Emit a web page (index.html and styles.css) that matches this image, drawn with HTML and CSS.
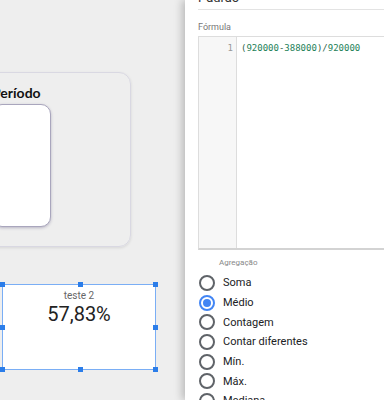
FILE: index.html
```html
<!DOCTYPE html>
<html>
<head>
  <title>Campo calculado</title>
  <link rel="stylesheet" href="styles.css">
</head>
<body>

<div class="canvas">
  <div class="card">
    <div class="card-title">Período</div>
    <div class="card-inner"></div>
  </div>

  <div class="scorecard">
    <div class="score-label">teste 2</div>
    <div class="score-value">57,83%</div>
    <span class="handle h-tl"></span>
    <span class="handle h-tm"></span>
    <span class="handle h-tr"></span>
    <span class="handle h-ml"></span>
    <span class="handle h-mr"></span>
    <span class="handle h-bl"></span>
    <span class="handle h-bm"></span>
    <span class="handle h-br"></span>
  </div>
</div>

<div class="panel">
  <div class="panel-head">Padrão</div>

  <div class="field-label">Fórmula</div>
  <div class="editor">
    <div class="gutter">1</div>
    <div class="code"><span class="op">(</span><span class="num">920000</span><span class="op">-</span><span class="num">388000</span><span class="op">)/</span><span class="num">920000</span></div>
  </div>

  <div class="agg-label">Agregação</div>
  <div class="radios">
    <div class="radio-row"><span class="radio"></span>Soma</div>
    <div class="radio-row"><span class="radio checked"></span>Médio</div>
    <div class="radio-row"><span class="radio"></span>Contagem</div>
    <div class="radio-row"><span class="radio"></span>Contar diferentes</div>
    <div class="radio-row"><span class="radio"></span>Mín.</div>
    <div class="radio-row"><span class="radio"></span>Máx.</div>
    <div class="radio-row"><span class="radio"></span>Mediana</div>
  </div>
</div>

</body>
</html>
```

FILE: styles.css
```css
/* page layout */
body {
  margin: 0;
  width: 384px;
  height: 400px;
  overflow: hidden;
  display: flex;
  background-color: #eeeeee;
  font-family: Roboto, Arial, sans-serif;
}

/* report canvas */
.canvas {
  width: 185px;
  flex: none;
  padding-top: 72px;
}
.card {
  margin-left: -20px;
  width: 138px;
  height: 162px;
  padding-top: 11px;
  padding-left: 11px;
  border: 1px solid #d9d8e2;
  border-radius: 12px;
  box-shadow: 0 1px 3px rgba(0, 0, 0, 0.1);
}
.card-title {
  font-family: Lato, "Open Sans", sans-serif;
  font-weight: bold;
  font-size: 14px;
  line-height: 17px;
  color: #111;
}
.card-inner {
  margin-top: 3px;
  width: 57px;
  height: 121px;
  background-color: white;
  border: 1px solid #a9a6bd;
  border-radius: 10px;
  box-shadow: 0 1px 3px rgba(60, 50, 100, 0.3);
}
.scorecard {
  position: relative;
  margin-top: 37px;
  margin-left: 2px;
  width: 154px;
  height: 86px;
  box-sizing: border-box;
  padding-top: 5px;
  background-color: white;
  border: 1px solid #7aaef5;
  text-align: center;
}
.score-label {
  font-size: 10px;
  line-height: 12px;
  color: #666;
}
.score-value {
  font-size: 20px;
  line-height: 24px;
  color: #222;
}
.handle {
  position: absolute;
  width: 5px;
  height: 5px;
  background-color: #2b7de9;
}
.h-tl, .h-tm, .h-tr { top: -3px; }
.h-bl, .h-bm, .h-br { bottom: -3px; }
.h-ml, .h-mr { top: 40px; }
.h-tl, .h-ml, .h-bl { left: -3px; }
.h-tr, .h-mr, .h-br { right: -3px; }
.h-tm, .h-bm { left: 75px; }

/* side panel */
.panel {
  flex: 1;
  background-color: white;
  box-shadow: -3px 0 8px rgba(0, 0, 0, 0.22);
  padding-left: 13px;
}
.panel-head {
  margin-top: -10px;
  height: 19px;
  font-size: 13px;
  line-height: 16px;
  color: #333;
  border-bottom: 1px solid #e3e3e3;
}
.field-label {
  margin-top: 12px;
  font-size: 9px;
  line-height: 11px;
  color: #777;
}
.editor {
  margin-top: 3px;
  width: 240px;
  height: 211px;
  display: flex;
  border: 1px solid #dddddd;
  border-bottom: 2px solid #d3d3d3;
}
.gutter {
  width: 34px;
  padding-right: 3px;
  padding-top: 5px;
  background-color: #f7f7f7;
  border-right: 1px solid #dddddd;
  text-align: right;
  font-family: "DejaVu Sans Mono", monospace;
  font-size: 9px;
  line-height: 13px;
  color: #999;
}
.code {
  padding-top: 5px;
  padding-left: 4px;
  font-family: "DejaVu Sans Mono", monospace;
  font-size: 9px;
  line-height: 13px;
  white-space: pre;
}
.code .num { color: #1d8158; }
.code .op { color: #2f5f4c; }
.agg-label {
  margin-top: 8px;
  padding-left: 21px;
  font-size: 8px;
  line-height: 10px;
  color: #888;
}
.radios {
  margin-top: 5px;
}
.radio-row {
  display: flex;
  align-items: center;
  height: 19.7px;
  font-size: 11px;
  color: #202124;
}
.radio {
  width: 12px;
  height: 12px;
  margin-left: 1px;
  margin-right: 8px;
  border: 2px solid #5f6368;
  border-radius: 50%;
  display: flex;
  align-items: center;
  justify-content: center;
}
.radio.checked {
  border-color: #4285f4;
}
.radio.checked::after {
  content: "";
  width: 8px;
  height: 8px;
  border-radius: 50%;
  background-color: #4285f4;
}
```
